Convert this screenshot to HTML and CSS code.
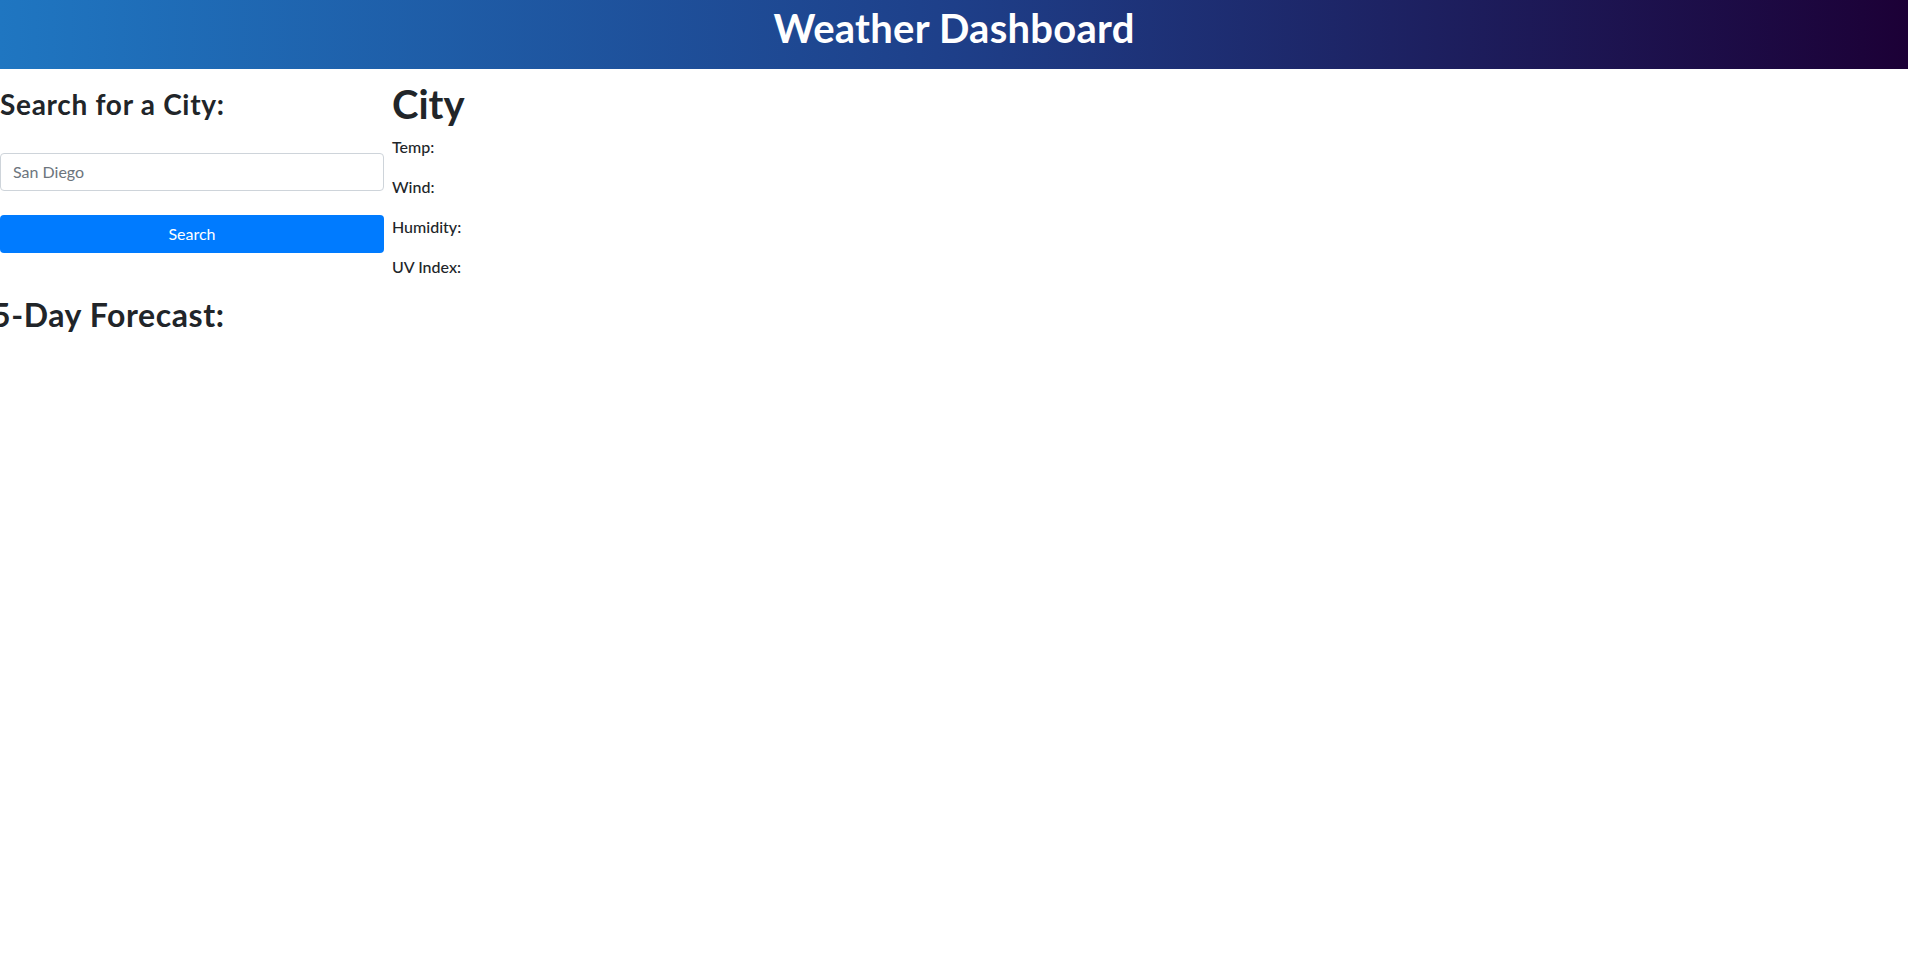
FILE: index.html
```html
<!DOCTYPE html>
<html lang="en">
<head>
<meta charset="utf-8">
<title>Weather Dashboard</title>
<link rel="stylesheet" href="styles.css">
</head>
<body>
<header class="banner">
  <h1 class="banner-title">Weather Dashboard</h1>
</header>
<main class="layout">
  <section class="sidebar">
    <h3 class="search-title">Search for a City:</h3>
    <input class="city-input" type="text" placeholder="San Diego">
    <button class="search-btn" type="button">Search</button>
    <h2 class="forecast-title">5-Day Forecast:</h2>
  </section>
  <section class="current">
    <h1 class="city-name">City</h1>
    <p class="stat">Temp:</p>
    <p class="stat">Wind:</p>
    <p class="stat">Humidity:</p>
    <p class="stat">UV Index:</p>
  </section>
</main>
</body>
</html>
```
FILE: styles.css
```css
* { box-sizing: border-box; }
html, body { margin: 0; padding: 0; }
body {
  font-family: Lato, "Noto Sans", sans-serif;
  color: #212529;
  background: #fff;
  font-size: 16px;
  line-height: 1.5;
}
.banner {
  height: 69px;
  padding-top: 4px;
  background: linear-gradient(to right, #1f76c1 0%, #1e3f89 50%, #1c0036 100%);
  display: flex;
  align-items: flex-start;
  justify-content: center;
}
.banner-title {
  margin: 0;
  color: #fff;
  font-size: 40px;
  font-weight: 700;
  line-height: 1.2;
  letter-spacing: 0.25px;
}
.layout {
  display: flex;
  gap: 8px;
  align-items: flex-start;
}
.sidebar {
  width: 384px;
  display: flex;
  flex-direction: column;
}
.search-title {
  margin: 19px 0 31px;
  font-size: 28px;
  font-weight: 700;
  line-height: 1.2;
  letter-spacing: 0.7px;
}
.city-input {
  height: 38px;
  width: 100%;
  border: 1px solid #ced4da;
  border-radius: 4px;
  padding: 6px 12px;
  font-family: inherit;
  font-size: 16px;
  color: #495057;
}
.city-input::placeholder { color: #6c757d; }
.search-btn {
  margin-top: 24px;
  height: 38px;
  width: 100%;
  border: 0;
  border-radius: 4px;
  background: #007bff;
  color: #fff;
  font-family: inherit;
  font-size: 16px;
}
.forecast-title {
  margin: 43px 0 0 -8px;
  font-size: 32px;
  font-weight: 700;
  line-height: 1.2;
  letter-spacing: 0.6px;
}
.current { display: flex; flex-direction: column; }
.city-name {
  margin: 11px 0 7px;
  font-size: 40px;
  font-weight: 700;
  line-height: 1.2;
}
.stat {
  margin: 0 0 16px;
  font-size: 16px;
  font-weight: 500;
  line-height: 24px;
}
```
